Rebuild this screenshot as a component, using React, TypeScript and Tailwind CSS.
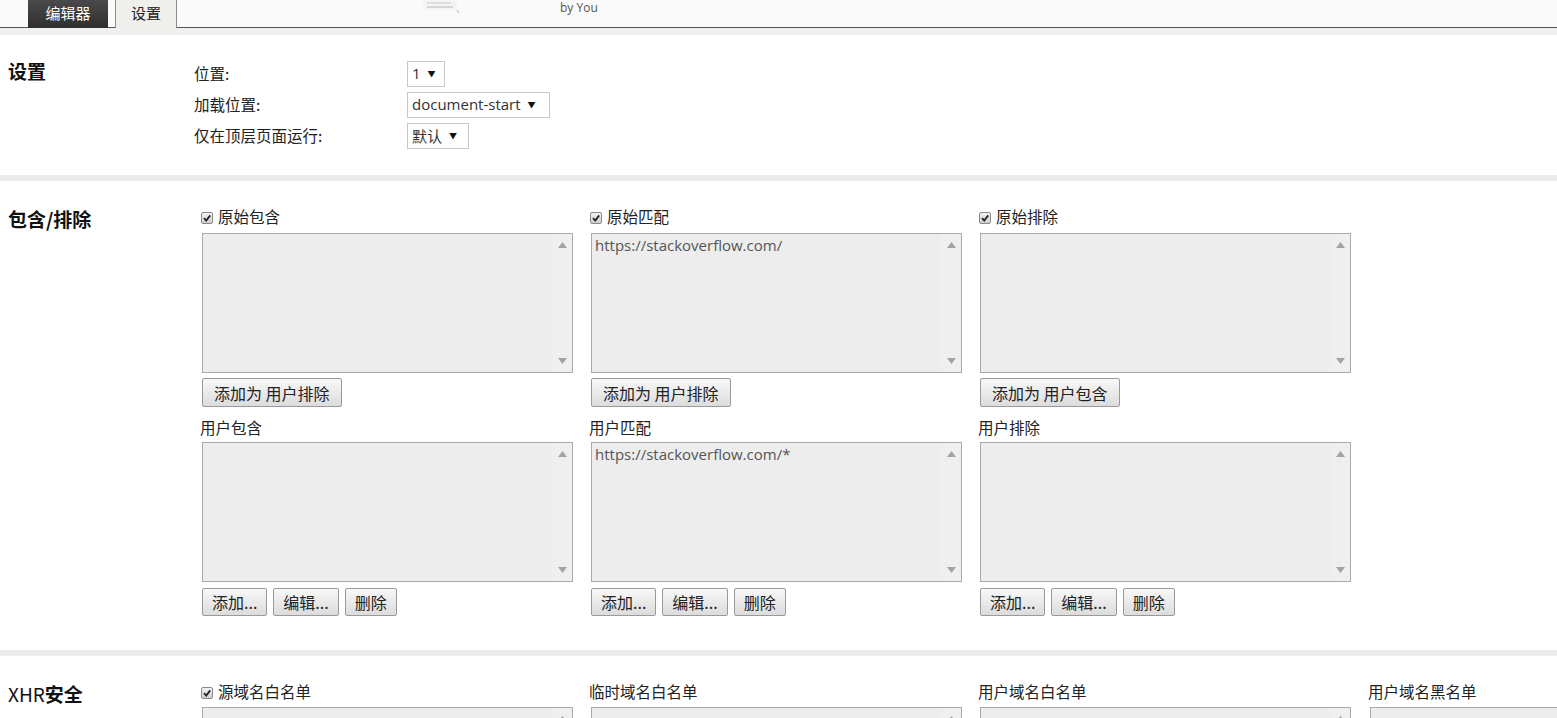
import React from "react";

const CJK = "font-['Microsoft_YaHei','Noto_Sans_CJK_SC',sans-serif]";

function Check() {
  return (
    <span className="inline-flex h-[12px] w-[12px] items-center justify-center rounded-[2px] border border-[#8a8a8a] bg-gradient-to-b from-[#f2f2f2] to-[#cfcfcf]">
      <svg width="10" height="10" viewBox="0 0 10 10">
        <path d="M2 5.2 L4.2 7.6 L8.2 2.4" fill="none" stroke="#222" strokeWidth="1.8" />
      </svg>
    </span>
  );
}

function Select({ label, w }: { label: string; w: string }) {
  return (
    <div
      className={`flex h-[26px] items-center gap-[7px] border border-[#c8c8c8] bg-white pl-[4px] text-[15px] text-[#333] ${w}`}
      style={{ fontFamily: "'Open Sans','Noto Sans CJK SC',sans-serif" }}
    >
      <span>{label}</span>
      <span className="text-[8px] text-[#111]">▼</span>
    </div>
  );
}

function Area({ text, h = "h-[140px]" }: { text?: string; h?: string }) {
  return (
    <div className={`ml-[2px] flex w-[371px] border border-[#a9a9a9] bg-[#ededed] ${h}`}>
      <div
        className="flex-1 px-[3px] text-[15px] text-[#555]"
        style={{ fontFamily: "'Open Sans',sans-serif" }}
      >
        {text}
      </div>
      <div className="flex w-[20px] flex-col items-center justify-between bg-[#efefef] py-[8px]">
        <svg width="9" height="6" viewBox="0 0 9 6">
          <path d="M0 6 L4.5 0 L9 6 Z" fill="#a3a3a3" />
        </svg>
        <svg width="9" height="6" viewBox="0 0 9 6">
          <path d="M0 0 L4.5 6 L9 0 Z" fill="#a3a3a3" />
        </svg>
      </div>
    </div>
  );
}

function Btn({ children, h = "h-[29px]", px = "px-[9px]" }: { children: React.ReactNode; h?: string; px?: string }) {
  return (
    <div
      className={`flex items-center rounded-[2px] border border-[#9a9a9a] bg-gradient-to-b from-[#f8f8f8] to-[#dcdcdc] text-[16px] text-[#222] ${px} ${h} ${CJK}`}
    >
      {children}
    </div>
  );
}

function Label({ children, checked }: { children: React.ReactNode; checked?: boolean }) {
  return (
    <div className={`flex h-[24px] items-center gap-[5px] text-[15.5px] text-[#222] ${CJK}`}>
      {checked && <span className="ml-[1px]"><Check /></span>}
      <span>{children}</span>
    </div>
  );
}

function IncludeCol({
  top,
  topText,
  addTo,
  bottom,
  bottomText,
}: {
  top: string;
  topText?: string;
  addTo: string;
  bottom: string;
  bottomText?: string;
}) {
  return (
    <div className="w-[389px] shrink-0">
      <Label checked>{top}</Label>
      <div className="mt-[4px]">
        <Area text={topText} />
      </div>
      <div className="ml-[2px] mt-[5px] flex">
        <Btn px="px-[11px]">添加为 {addTo}</Btn>
      </div>
      <div className="mt-[9px]">
        <Label>{bottom}</Label>
      </div>
      <div className="mt-[2px]">
        <Area text={bottomText} />
      </div>
      <div className="ml-[2px] mt-[6px] flex gap-[6px]">
        <Btn h="h-[28px]">添加...</Btn>
        <Btn h="h-[28px]">编辑...</Btn>
        <Btn h="h-[28px]" px="px-[9px]">删除</Btn>
      </div>
    </div>
  );
}

export default function App() {
  return (
    <div className={`h-screen w-full overflow-hidden bg-white ${CJK}`}>
      {/* header */}
      <div className="flex h-[28px] items-end bg-[#fafafa]">
        <div className="h-full w-[28px] border-b border-[#555]" />
        <div className="flex h-full w-[80px] items-center justify-center bg-gradient-to-b from-[#4a4a4a] to-[#2f2f2f] pb-[2px] text-[15px] text-white">
          编辑器
        </div>
        <div className="h-full w-[7px] border-b border-[#555]" />
        <div className="flex h-full w-[62px] items-center justify-center border-x border-[#8c8c8c] bg-[#efefeb] pb-[2px] text-[15px] text-[#222]">
          设置
        </div>
        <div className="relative h-full flex-1 border-b border-[#555]">
          <svg className="absolute left-[244px] top-0" width="42" height="16" viewBox="0 0 42 16">
            <rect x="2" y="0" width="34" height="10" fill="#f4f4f4" />
            <line x1="6" y1="3" x2="30" y2="3" stroke="#c8c8c8" strokeWidth="1" />
            <line x1="6" y1="7" x2="32" y2="7" stroke="#b8b8b8" strokeWidth="1" />
            <path d="M36 10 L38 13" stroke="#aaa" strokeWidth="1" />
          </svg>
          <div className="absolute left-[415px] top-[-3px] h-[3px] w-[5px] rounded-b bg-[#222]" />
          <div className="absolute left-[438px] top-[-3px] h-[3px] w-[3px] bg-[#222]" />
          <div
            className="absolute left-[383px] top-[-1px] text-[12px] text-[#555]"
            style={{ fontFamily: "'Open Sans',sans-serif" }}
          >
            by You
          </div>
        </div>
      </div>
      <div className="h-[7px] bg-[#f0f0f0]" />

      {/* Section: 设置 */}
      <div className="flex pb-[26px] pt-[26px]">
        <div className="-mt-[2px] w-[194px] shrink-0 pl-[8px] text-[19px] font-bold leading-[24px] text-[#111]">设置</div>
        <div className="flex flex-col gap-[6px]">
          <div className="flex h-[25px] items-center">
            <div className="w-[213px] text-[15.5px] text-[#222]">位置:</div>
            <Select label="1" w="w-[38px] h-[25px]" />
          </div>
          <div className="flex h-[25px] items-center">
            <div className="w-[213px] text-[15.5px] text-[#222]">加载位置:</div>
            <Select label="document-start" w="w-[143px]" />
          </div>
          <div className="flex h-[26px] items-center">
            <div className="w-[213px] text-[15.5px] text-[#222]">仅在顶层页面运行:</div>
            <Select label="默认" w="w-[62px]" />
          </div>
        </div>
      </div>
      <div className="h-[6px] bg-[#ececec]" />

      {/* Section: 包含/排除 */}
      <div className="flex pb-[34px] pt-[24px]">
        <div className="w-[200px] shrink-0 pl-[8px] pt-[2px] text-[19px] font-bold leading-[24px] text-[#111]">包含/排除</div>
        <div className="flex">
          <IncludeCol top="原始包含" addTo="用户排除" bottom="用户包含" />
          <IncludeCol
            top="原始匹配"
            topText="https://stackoverflow.com/"
            addTo="用户排除"
            bottom="用户匹配"
            bottomText="https://stackoverflow.com/*"
          />
          <IncludeCol top="原始排除" addTo="用户包含" bottom="用户排除" />
        </div>
      </div>
      <div className="h-[6px] bg-[#ececec]" />

      {/* Section: XHR安全 */}
      <div className="flex pt-[24px]">
        <div className="w-[200px] shrink-0 pl-[8px] pt-[2px] text-[19px] leading-[24px] text-[#111]">
          XHR<span className="font-bold">安全</span>
        </div>
        <div className="flex">
          <div className="w-[389px] shrink-0">
            <Label checked>源域名白名单</Label>
            <div className="mt-[3px]"><Area /></div>
          </div>
          <div className="w-[389px] shrink-0">
            <Label>临时域名白名单</Label>
            <div className="mt-[3px]"><Area /></div>
          </div>
          <div className="w-[390px] shrink-0">
            <Label>用户域名白名单</Label>
            <div className="mt-[3px]"><Area /></div>
          </div>
          <div className="w-[389px] shrink-0">
            <Label>用户域名黑名单</Label>
            <div className="mt-[3px]"><Area /></div>
          </div>
        </div>
      </div>
    </div>
  );
}
